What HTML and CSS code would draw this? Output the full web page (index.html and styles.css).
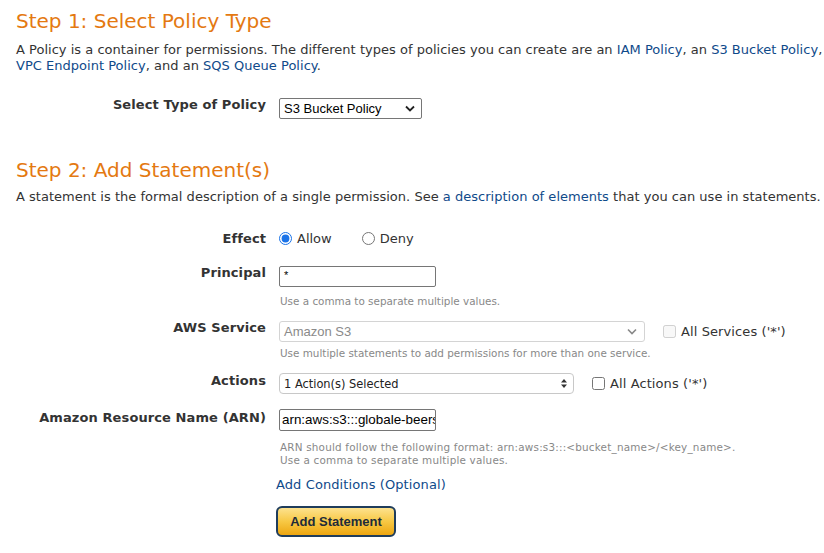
FILE: index.html
```html
<!DOCTYPE html>
<html>
<head>
<meta charset="utf-8">
<link rel="stylesheet" href="styles.css">
</head>
<body>
<div class="page">
  <h1 class="step step1">Step 1: Select Policy Type</h1>
  <p class="intro">A Policy is a container for permissions. The different types of policies you can create are an <a href="#">IAM Policy</a>, an <a href="#">S3 Bucket Policy</a>,<br><a href="#">VPC Endpoint Policy</a>, and an <a href="#">SQS Queue Policy</a>.</p>

  <div class="row row-type">
    <div class="label">Select Type of Policy</div>
    <div class="field">
      <div class="select select-type">
        <span>S3 Bucket Policy</span>
        <svg class="chev" width="10" height="7" viewBox="0 0 10 7"><path d="M1 1.5 L5 5.5 L9 1.5" fill="none" stroke="#222" stroke-width="1.8"/></svg>
      </div>
    </div>
  </div>

  <h1 class="step step2">Step 2: Add Statement(s)</h1>
  <p class="intro2">A statement is the formal description of a single permission. See <a href="#">a description of elements</a> that you can use in statements.</p>

  <div class="row row-effect">
    <div class="label">Effect</div>
    <div class="field radios">
      <label class="opt"><input type="radio" name="effect" checked> Allow</label>
      <label class="opt"><input type="radio" name="effect"> Deny</label>
    </div>
  </div>

  <div class="row row-principal">
    <div class="label">Principal</div>
    <div class="field">
      <div class="textbox principal">*</div>
      <div class="hint">Use a comma to separate multiple values.</div>
    </div>
  </div>

  <div class="row row-service">
    <div class="label">AWS Service</div>
    <div class="field">
      <div class="inline">
        <div class="select select-service">
          <span>Amazon S3</span>
          <svg class="chev" width="10" height="7" viewBox="0 0 10 7"><path d="M1 1.5 L5 5.5 L9 1.5" fill="none" stroke="#888" stroke-width="1.6"/></svg>
        </div>
        <label class="check disabled"><input type="checkbox" disabled> All Services ('*')</label>
      </div>
      <div class="hint">Use multiple statements to add permissions for more than one service.</div>
    </div>
  </div>

  <div class="row row-actions">
    <div class="label">Actions</div>
    <div class="field">
      <div class="inline">
        <div class="select select-actions">
          <span>1 Action(s) Selected</span>
          <svg class="updown" width="6" height="9" viewBox="0 0 6 9"><path d="M0 3.5 L3 0 L6 3.5 Z M0 5.5 L3 9 L6 5.5 Z" fill="#333"/></svg>
        </div>
        <label class="check"><input type="checkbox"> All Actions ('*')</label>
      </div>
    </div>
  </div>

  <div class="row row-arn">
    <div class="label">Amazon Resource Name (ARN)</div>
    <div class="field">
      <div class="textbox arn">arn:aws:s3:::globale-beers</div>
      <div class="hint">ARN should follow the following format: arn:aws:s3:::&lt;bucket_name&gt;/&lt;key_name&gt;.<br>Use a comma to separate multiple values.</div>
    </div>
  </div>

  <div class="actions-col">
    <a href="#" class="conditions">Add Conditions (Optional)</a>
    <button class="add-btn">Add Statement</button>
  </div>
</div>
</body>
</html>
```

FILE: styles.css
```css
html, body {
  margin: 0;
  padding: 0;
  background: #fff;
}
body {
  font-family: "DejaVu Sans", Verdana, sans-serif;
  font-size: 13px;
  color: #333;
}
.page {
  padding: 0 0 0 16px;
}
a {
  color: #0f4a8a;
  text-decoration: none;
}
.step {
  font-weight: normal;
  font-size: 20px;
  line-height: 24px;
  color: #e47911;
  margin: 0;
}
.step1 { padding-top: 9px; }
.step2 { margin-top: 39px; }
.intro {
  margin: 9px 0 0;
  line-height: 16px;
  white-space: nowrap;
  letter-spacing: 0.02px;
}
.intro2 {
  margin: 7px 0 0;
  line-height: 16px;
  white-space: nowrap;
  letter-spacing: 0.02px;
}
.row {
  display: grid;
  grid-template-columns: 250px 1fr;
  column-gap: 13px;
  align-items: start;
}
.label {
  text-align: right;
  font-weight: bold;
  line-height: 16px;
  letter-spacing: 0.1px;
}
.row-type { margin-top: 24px; }
.row-type .label { margin-top: -1px; }
.row-effect { margin-top: 25px; }
.row-effect .label { margin-top: 1px; }
.row-principal { margin-top: 19px; }
.row-principal .label { margin-top: -1px; }
.row-service { margin-top: 13px; }
.row-service .label { margin-top: -1px; }
.row-actions { margin-top: 13px; }
.row-arn { margin-top: 15px; }
.row-arn .label { margin-top: 1px; }

.select {
  box-sizing: border-box;
  display: flex;
  align-items: center;
  justify-content: space-between;
  height: 21px;
  background: #fff;
  font-family: "Liberation Sans", Arial, sans-serif;
  font-size: 13px;
  color: #000;
}
.select-type {
  width: 143px;
  border: 1px solid #767676;
  border-radius: 2px;
  padding: 0 6px 0 4px;
}
.select-service {
  width: 366px;
  border: 1px solid #d4d4d4;
  border-radius: 3px;
  color: #8a8a8a;
  padding: 0 7px 0 4px;
}
.select-actions {
  width: 295px;
  border: 1px solid #c8c8c8;
  border-radius: 4px;
  padding: 0 6px 0 4px;
  font-family: "DejaVu Sans Condensed", "DejaVu Sans", sans-serif;
  font-size: 12.7px;
  color: #222;
}
.chev { display: block; }
.updown { display: block; }

.radios {
  display: flex;
  align-items: center;
  height: 16px;
}
.opt {
  display: flex;
  align-items: center;
  margin-right: 30px;
}
.opt input {
  margin: 0 5px 0 0;
  width: 13px;
  height: 13px;
  accent-color: #1a73e8;
}
.textbox {
  box-sizing: border-box;
  width: 157px;
  height: 21px;
  border: 1px solid #767676;
  border-radius: 2px;
  padding: 0 4px;
  font-family: "Liberation Sans", Arial, sans-serif;
  font-size: 13px;
  line-height: 19px;
  color: #000;
  overflow: hidden;
  white-space: nowrap;
}
.principal {
  font-size: 11px;
  line-height: 16px;
}
.arn {
  height: 22px;
  line-height: 20px;
  font-size: 13.4px;
  padding: 0 2px;
}
.hint {
  font-size: 10.4px;
  line-height: 13px;
  color: #888;
  margin-top: 8px;
  padding-left: 1px;
}
.row-service .hint { margin-top: 5px; }
.row-arn .hint { margin-top: 10px; letter-spacing: 0.2px; }
.inline {
  display: flex;
  align-items: center;
}
.check {
  display: flex;
  align-items: center;
  margin-left: 18px;
  font-size: 13px;
  color: #333;
  letter-spacing: 0.1px;
}
.check input {
  margin: 0 5px 0 0;
  width: 13px;
  height: 13px;
}

.actions-col {
  display: flex;
  flex-direction: column;
  align-items: flex-start;
  padding-left: 260px;
  margin-top: 9px;
}
.conditions {
  font-size: 13px;
  line-height: 18px;
  letter-spacing: 0.1px;
}
.add-btn {
  margin-top: 12px;
  box-sizing: border-box;
  width: 120px;
  height: 31px;
  border: 2px solid #1f3d5c;
  border-radius: 6px;
  background: linear-gradient(to bottom, #fde28e 0%, #f7c844 50%, #eda611 100%);
  font-family: "Liberation Sans", Arial, sans-serif;
  font-weight: bold;
  font-size: 13px;
  color: #1d2b3a;
  padding: 0;
  cursor: pointer;
}
```
